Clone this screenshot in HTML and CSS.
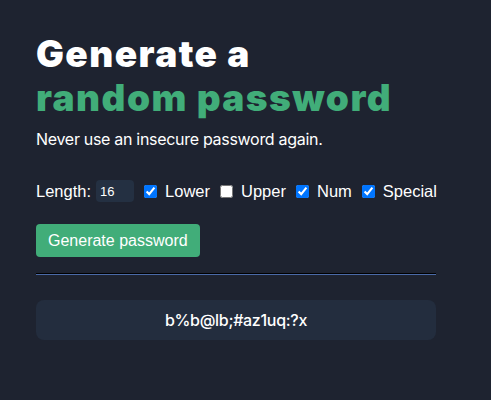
FILE: index.html
```html
<!DOCTYPE html>
<html>
<head>
<meta charset="utf-8">
<link rel="stylesheet" href="styles.css">
</head>
<body>
<main class="app">
  <h1 class="title">Generate a<br><span class="accent">random password</span></h1>
  <p class="subtitle">Never use an insecure password again.</p>
  <div class="options">
    <label class="opt opt-len">Length: <input class="len" type="number" value="16"></label>
    <label class="opt"><input class="chk" type="checkbox" checked> Lower</label>
    <label class="opt"><input class="chk" type="checkbox"> Upper</label>
    <label class="opt"><input class="chk" type="checkbox" checked> Num</label>
    <label class="opt"><input class="chk" type="checkbox" checked> Special</label>
  </div>
  <button class="gen">Generate password</button>
  <hr class="divider">
  <div class="result">b%b@lb;#az1uq:?x</div>
</main>
</body>
</html>
```
FILE: styles.css
```css
html, body {
  margin: 0;
  background: #1e2330;
}
body {
  font-family: "Liberation Sans", Arial, sans-serif;
  color: #ffffff;
}
.app {
  width: 400px;
  padding: 32px 36px;
}
.title {
  margin: 0;
  font-family: Inter, sans-serif;
  font-weight: 900;
  font-size: 37px;
  line-height: 44px;
  letter-spacing: 1.45px;
}
.accent {
  color: #41ad79;
}
.subtitle {
  margin: 9px 0 0;
  font-family: Inter, sans-serif;
  font-size: 16px;
  line-height: 20px;
  letter-spacing: -0.3px;
}
.options {
  display: flex;
  align-items: center;
  gap: 10px;
  height: 22px;
  margin-top: 31px;
  font-size: 16.5px;
}
.opt {
  display: flex;
  align-items: center;
  gap: 8px;
}
.opt-len {
  gap: 5px;
}
.chk {
  margin: 0;
  width: 13px;
  height: 13px;
}
.len {
  width: 38px;
  height: 22px;
  box-sizing: border-box;
  border: none;
  border-radius: 4px;
  background: #243042;
  color: #fff;
  font-family: "Liberation Sans", Arial, sans-serif;
  font-size: 13px;
  padding: 0 4px;
}
.gen {
  display: block;
  margin-top: 22px;
  background: #41ad79;
  color: #fff;
  border: none;
  border-radius: 4px;
  font-family: "Liberation Sans", Arial, sans-serif;
  font-size: 16px;
  line-height: 19px;
  padding: 7px 12px;
}
.divider {
  margin: 16px 0 0;
  border: none;
  border-top: 1px solid #000;
  border-bottom: 1px solid #4a6aa8;
}
.result {
  margin-top: 25px;
  height: 40px;
  border-radius: 8px;
  background: #232d3e;
  display: flex;
  align-items: center;
  justify-content: center;
  font-family: Inter, sans-serif;
  font-weight: 500;
  font-size: 16px;
  letter-spacing: -0.3px;
}
```
